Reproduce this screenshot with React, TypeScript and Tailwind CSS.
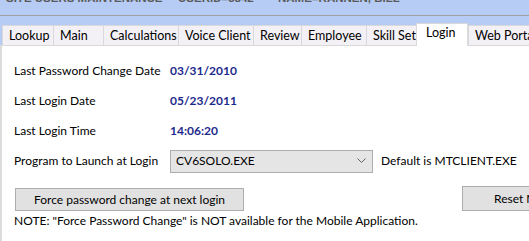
import React from "react";

const tabs = [
  { label: "Lookup", w: 51 },
  { label: "Main", w: 50 },
  { label: "Calculations", w: 75 },
  { label: "Voice Client", w: 75 },
  { label: "Review", w: 48 },
  { label: "Employee", w: 65 },
  { label: "Skill Set", w: 50 },
  { label: "Login", w: 52, active: true },
  { label: "Web Portal", w: 80 },
];

export default function App() {
  return (
    <div
      className="w-[529px] h-[241px] overflow-hidden bg-white text-[12px] text-black"
      style={{ fontFamily: 'Lato, "Noto Sans", sans-serif' }}
    >
      {/* title bar */}
      <div className="h-[16px] bg-[#b6ccf5] border-b border-[#a0a0a0] overflow-hidden">
        <div
          className="flex mt-[-8px] pl-[6px] text-[#5a5a5a] font-bold text-[11.5px] leading-[12px] whitespace-nowrap"
          style={{ fontFamily: '"Liberation Sans", Arial, sans-serif' }}
        >
          <span className="w-[172px]">SITE USERS MAINTENANCE</span>
          <span className="w-[100px]">USERID=5842</span>
          <span>NAME=KANNEN, BILL</span>
        </div>
      </div>
      {/* tab strip */}
      <div className="h-[30px] bg-[#b6ccf5] flex items-end pl-[2px] border-b border-[#d9d9d9]">
        {tabs.map((t) =>
          t.active ? (
            <div
              key={t.label}
              style={{ width: t.w }}
              className="h-[23px] mb-[-1px] bg-white border border-b-0 border-[#d9d9d9] pl-[9px] pt-[1px] leading-[16px] shrink-0 text-[12.5px]"
            >
              {t.label}
            </div>
          ) : (
            <div
              key={t.label}
              style={{ width: t.w }}
              className="h-[20px] bg-[#f4f1f6] border-l border-t border-[#d9d9d9] pl-[6px] leading-[19px] shrink-0 whitespace-nowrap text-[12.5px]"
            >
              {t.label}
            </div>
          )
        )}
      </div>
      {/* content */}
      <div className="border-l-2 border-[#dcdcdc] pl-[12px] pt-[10px] h-[200px]">
        <div className="flex items-center h-[30px] whitespace-nowrap">
          <span className="w-[156px] shrink-0">Last Password Change Date</span>
          <span className="font-bold text-[#1c2a8c]">03/31/2010</span>
        </div>
        <div className="flex items-center h-[30px] whitespace-nowrap">
          <span className="w-[156px] shrink-0">Last Login Date</span>
          <span className="font-bold text-[#1c2a8c]">05/23/2011</span>
        </div>
        <div className="flex items-center h-[30px] whitespace-nowrap">
          <span className="w-[156px] shrink-0">Last Login Time</span>
          <span className="font-bold text-[#1c2a8c]">14:06:20</span>
        </div>
        <div className="flex items-center h-[30px] whitespace-nowrap">
          <span className="w-[156px] shrink-0">Program to Launch at Login</span>
          <div className="w-[203px] h-[23px] bg-[#e5e5e5] border border-[#adadad] flex items-center justify-between pl-[5px] pr-[6px] shrink-0">
            <span>CV6SOLO.EXE</span>
            <svg width="9" height="6" viewBox="0 0 9 6">
              <path d="M0.5 0.5 L4.5 4.5 L8.5 0.5" fill="none" stroke="#606060" strokeWidth="1" />
            </svg>
          </div>
          <span className="ml-[8px]">Default is MTCLIENT.EXE</span>
        </div>
        <div className="flex items-end gap-[218px] mt-[11px] h-[24px]">
          <div className="w-[229px] h-[23px] bg-[#e1e1e1] border border-[#adadad] flex items-center justify-center ml-[1px] shrink-0 whitespace-nowrap">
            Force password change at next login
          </div>
          <div className="w-[150px] h-[25px] bg-[#e1e1e1] border border-[#adadad] flex items-center pl-[31px] whitespace-nowrap shrink-0">
            Reset MTCLIENT
          </div>
        </div>
        <div className="mt-[1px] whitespace-nowrap leading-[18px]">
          NOTE: "Force Password Change" is NOT available for the Mobile Application.
        </div>
      </div>
    </div>
  );
}
